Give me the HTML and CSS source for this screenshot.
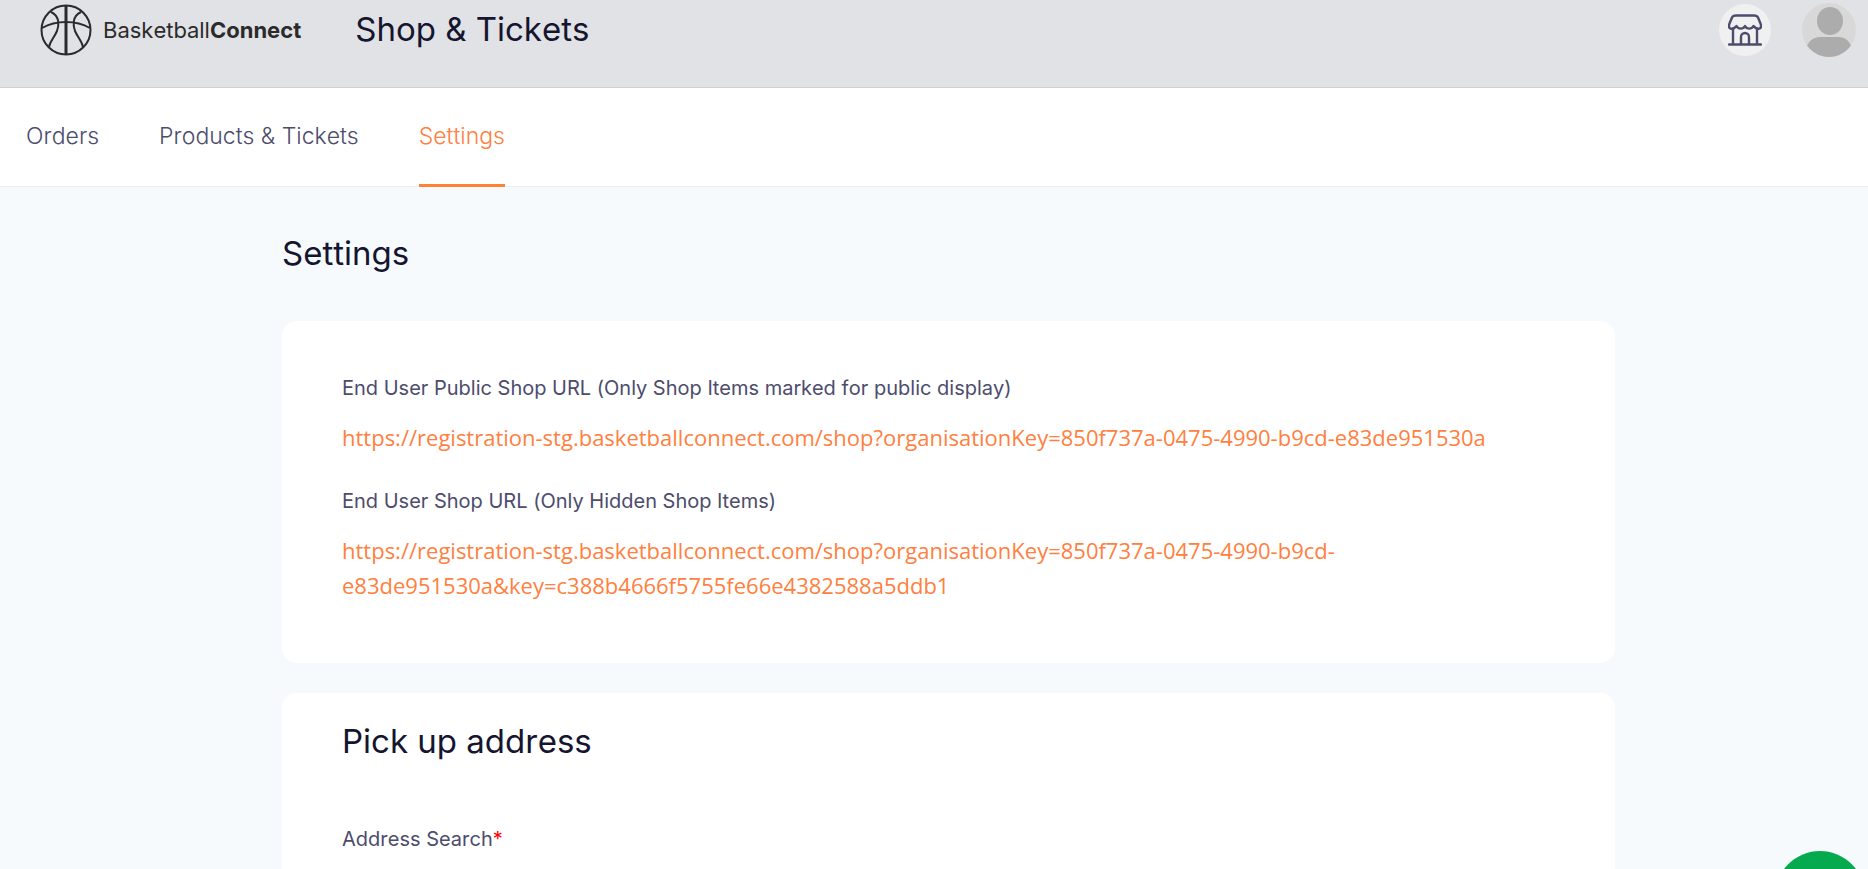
FILE: index.html
```html
<!DOCTYPE html>
<html lang="en">
<head>
    <meta charset="utf-8">
    <title>Shop &amp; Tickets - Settings</title>
    <link rel="stylesheet" href="styles.css">
</head>
<body>
    <header class="header">
        <a class="logo" href="#">
            <svg class="logo-ball" viewBox="0 0 52 52" fill="none" stroke="#2b2b2b" stroke-width="2">
                <circle cx="26" cy="26" r="24.5"/>
                <path d="M26 1.5v49" stroke-width="3"/>
                <path d="M2 24C16 16 36 16 50 24"/>
                <path d="M11 8C20 12 19 22 17 27C14 34 10 37 9 43"/>
                <path d="M41 8C32 12 33 22 35 27C38 34 42 37 43 43"/>
            </svg>
            <span class="logo-text">Basketball<b>Connect</b></span>
        </a>
        <h1 class="header-title">Shop &amp; Tickets</h1>
        <div class="header-actions">
            <button class="shop-button" type="button" aria-label="Shop">
                <svg viewBox="0 0 34 32" fill="none" stroke="#4c4c6d" stroke-width="2.4" stroke-linecap="round" stroke-linejoin="round">
                    <path d="M8 1.5h18q3 0 4 2l2.5 6q.5 1 .5 3c0 3-5 3-7.500-.5c-2 3.500-6.500 3.500-8.500 0c-2 3.500-6.500 3.500-8.500 0C6 15.500 1 15.500 1 12.500q0-2 .5-3l2.500-6q1-2 4-2z"/>
                    <path d="M5 15v15.500M29 15v15.500M1 30.500h32"/>
                    <path d="M13 30v-7a4 4 0 0 1 8 0v7"/>
                </svg>
            </button>
            <button class="avatar" type="button" aria-label="Profile">
                <svg viewBox="0 0 54 54">
                    <clipPath id="avatar-clip"><circle cx="27" cy="27" r="27"/></clipPath>
                    <g clip-path="url(#avatar-clip)">
                        <rect width="54" height="54" fill="#d8d8d8"/>
                        <ellipse cx="28" cy="18" rx="13" ry="14" fill="#acacac"/>
                        <path d="M3 54V48Q7 34 18 34H37Q47 34 51 48V54z" fill="#acacac"/>
                    </g>
                </svg>
            </button>
        </div>
    </header>

    <nav class="tabs">
        <a class="tab" href="#">Orders</a>
        <a class="tab" href="#">Products &amp; Tickets</a>
        <a class="tab active" href="#">Settings</a>
    </nav>

    <main class="content">
        <h2 class="title">Settings</h2>

        <section class="card links-card">
            <p class="label">End User Public Shop URL (Only Shop Items marked for public display)</p>
            <a class="shop-link" href="#">https://registration-stg.basketballconnect.com/shop?organisationKey=850f737a-0475-4990-b9cd-e83de951530a</a>
            <p class="label">End User Shop URL (Only Hidden Shop Items)</p>
            <a class="shop-link" href="#">https://registration-stg.basketballconnect.com/shop?organisationKey=850f737a-0475-4990-b9cd-<wbr>e83de951530a&amp;key=c388b4666f5755fe66e4382588a5ddb1</a>
        </section>

        <section class="card address-card">
            <h2 class="title">Pick up address</h2>
            <label class="label" for="address-search">Address Search<span class="required">*</span></label>
            <input class="address-input" id="address-search" type="text">
        </section>
    </main>

    <button class="help-button" type="button" aria-label="Help"></button>
</body>
</html>
```
FILE: styles.css
```css
* {
    box-sizing: border-box;
}
html {
    height: 100%;
    overflow: hidden;
}
body {
    height: 100%;
    margin: 0;
    overflow: hidden;
    background: #f6fafd;
    color: #4c4c6d;
    font-family: Inter, sans-serif;
    font-size: 20px;
    font-kerning: none;
    font-variant-ligatures: none;
}
a {
    text-decoration: none;
}
button {
    padding: 0;
    border: none;
    cursor: pointer;
}

/* Header */
.header {
    display: flex;
    align-items: center;
    padding: 3px 12px 30px 40px;
    background: #e1e2e6;
    border-bottom: 1px solid #cfd0d4;
}
.logo {
    display: flex;
    align-items: center;
    gap: 11px;
    color: #2b2b2b;
}
.logo-ball {
    width: 52px;
    height: 52px;
}
.logo-text {
    font-size: 22px;
}
.header-title {
    margin: 0 0 0 54px;
    padding-bottom: 2px;
    color: #15152f;
    font-size: 33px;
    font-weight: 400;
    line-height: 40px;
}
.header-actions {
    display: flex;
    align-items: center;
    gap: 31px;
    margin-left: auto;
}
.shop-button {
    display: flex;
    align-items: center;
    justify-content: center;
    width: 52px;
    height: 52px;
    border-radius: 50%;
    background: #f0f0f0;
}
.shop-button svg {
    width: 34px;
    height: 32px;
}
.avatar {
    width: 54px;
    height: 54px;
    border-radius: 50%;
    background: none;
}
.avatar svg {
    display: block;
}

/* Tabs */
.tabs {
    display: flex;
    gap: 60px;
    padding: 0 26px;
    background: #fff;
    border-bottom: 1px solid #ebeef0;
}
.tab {
    margin-bottom: -1px;
    padding: 30px 0;
    border-bottom: 3px solid transparent;
    color: #4c4c6d;
    font-size: 23px;
    font-weight: 300;
    line-height: 36px;
}
.tab.active {
    border-color: #ff8237;
    color: #ff8040;
}

/* Content */
.content {
    padding: 46px 253px 0 282px;
}
.title {
    margin: 0;
    color: #15152f;
    font-size: 33px;
    font-weight: 400;
    line-height: 40px;
}
.card {
    margin-bottom: 30px;
    padding: 0 60px;
    border-radius: 15px;
    background: #fff;
}
.links-card {
    margin-top: 48px;
    padding-top: 52px;
    padding-bottom: 60px;
}
.label {
    display: block;
    margin: 0 0 17px;
    font-size: 20px;
    line-height: 30px;
}
.shop-link {
    display: block;
    color: #ff8040;
    font-family: "Open Sans", sans-serif;
    font-size: 22px;
    line-height: 35px;
}
.shop-link + .label {
    margin-top: 31px;
}
.address-card {
    padding-top: 28px;
    padding-bottom: 60px;
}
.address-card .label {
    margin-top: 63px;
}
.required {
    color: #f00;
}
.address-input {
    width: 100%;
    height: 60px;
    padding: 0 20px;
    border: 1px solid #d9d9d9;
    border-radius: 6px;
    font-size: 20px;
}

/* Floating button, hangs over the bottom edge */
.help-button {
    position: fixed;
    right: 3px;
    bottom: -72px;
    width: 90px;
    height: 90px;
    border-radius: 50%;
    background: #05a94e;
}
```
